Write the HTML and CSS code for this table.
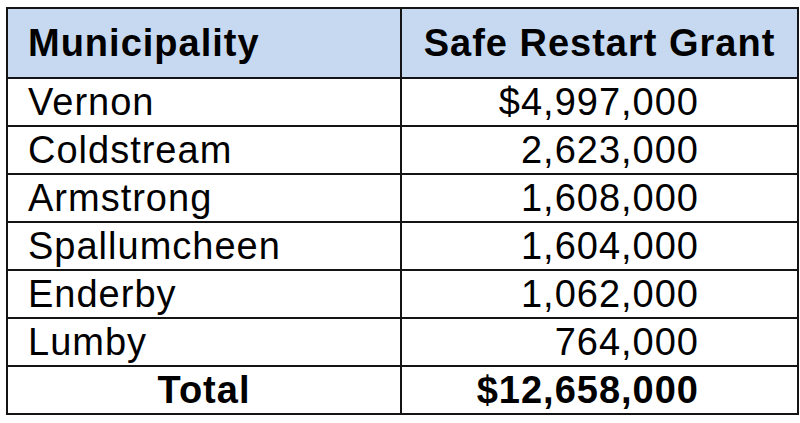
FILE: index.html
```html
<!DOCTYPE html>
<html>
<head>
<meta charset="utf-8">
<link rel="stylesheet" href="styles.css">
</head>
<body>
<table class="grants">
  <colgroup><col class="col-name"><col class="col-amount"></colgroup>
  <thead>
    <tr class="head-row"><th class="th-name">Municipality</th><th class="th-amount">Safe Restart Grant</th></tr>
  </thead>
  <tbody>
    <tr><td class="name">Vernon</td><td class="amount">$4,997,000</td></tr>
    <tr><td class="name">Coldstream</td><td class="amount">2,623,000</td></tr>
    <tr><td class="name">Armstrong</td><td class="amount">1,608,000</td></tr>
    <tr><td class="name">Spallumcheen</td><td class="amount">1,604,000</td></tr>
    <tr><td class="name">Enderby</td><td class="amount">1,062,000</td></tr>
    <tr><td class="name">Lumby</td><td class="amount">764,000</td></tr>
    <tr class="total-row"><td class="total-label">Total</td><td class="amount total-amount">$12,658,000</td></tr>
  </tbody>
</table>
</body>
</html>
```
FILE: styles.css
```css
html, body {
  margin: 0;
  padding: 0;
  background: #ffffff;
}
body {
  padding: 7px 0 0 6px;
  font-family: "Liberation Sans", Arial, sans-serif;
  color: #000;
}
.grants {
  border-collapse: collapse;
  table-layout: fixed;
  width: 791px;
  font-size: 38px;
  letter-spacing: 1px;
}
.col-name { width: 394px; }
.col-amount { width: 397px; }
.grants th,
.grants td {
  border: 2px solid #141414;
  padding: 0;
  vertical-align: middle;
  line-height: 1;
}
.grants .head-row th {
  background: #c6d9f1;
  height: 68px;
  font-weight: bold;
}
.grants .th-name {
  text-align: left;
  padding-left: 20px;
}
.grants .th-amount {
  text-align: center;
}
.grants td {
  height: 46px;
}
.grants .name {
  text-align: left;
  padding-left: 20px;
}
.grants .amount {
  text-align: right;
  padding-right: 98px;
}
.grants .total-label {
  text-align: center;
  font-weight: bold;
}
.grants .total-amount {
  font-weight: bold;
}
```
